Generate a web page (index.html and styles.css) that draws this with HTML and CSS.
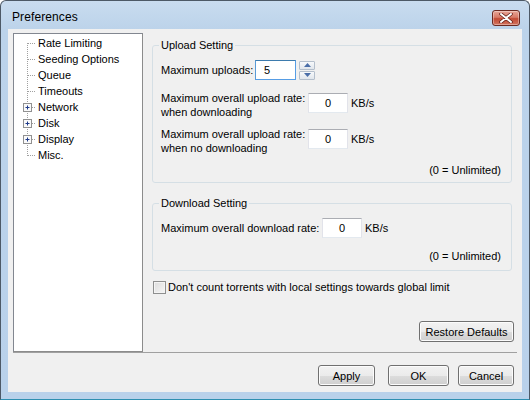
FILE: index.html
```html
<!DOCTYPE html>
<html>
<head>
<meta charset="utf-8">
<link rel="stylesheet" href="styles.css">
</head>
<body>
<div class="window">
  <div class="titlebar">
    <span class="title">Preferences</span>
    <div class="close">
      <svg width="14" height="10" viewBox="0 0 14 10"><path d="M2 1 L12 9 M12 1 L2 9" stroke="#5a1a14" stroke-width="3.4" stroke-linecap="round"/><path d="M2 1 L12 9 M12 1 L2 9" stroke="#ffffff" stroke-width="2" stroke-linecap="round"/></svg>
    </div>
  </div>
  <div class="client">
    <div class="main">
      <div class="tree">
        <div class="row"><svg width="20" height="16"><path d="M9.5 8 V16" class="dot"/><path d="M10 8.5 H18" class="dot"/></svg><span>Rate Limiting</span></div>
        <div class="row"><svg width="20" height="16"><path d="M9.5 0 V16" class="dot"/><path d="M10 8.5 H18" class="dot"/></svg><span>Seeding Options</span></div>
        <div class="row"><svg width="20" height="16"><path d="M9.5 0 V16" class="dot"/><path d="M10 8.5 H18" class="dot"/></svg><span>Queue</span></div>
        <div class="row"><svg width="20" height="16"><path d="M9.5 0 V16" class="dot"/><path d="M10 8.5 H18" class="dot"/></svg><span>Timeouts</span></div>
        <div class="row"><svg width="20" height="16"><path d="M9.5 0 V16" class="dot"/><path d="M14 8.5 H18" class="dot"/><rect x="5.5" y="4.5" width="8" height="8" class="box"/><path d="M7.5 8.5 H11.5 M9.5 6.5 V10.5" class="plus"/></svg><span>Network</span></div>
        <div class="row"><svg width="20" height="16"><path d="M9.5 0 V16" class="dot"/><path d="M14 8.5 H18" class="dot"/><rect x="5.5" y="4.5" width="8" height="8" class="box"/><path d="M7.5 8.5 H11.5 M9.5 6.5 V10.5" class="plus"/></svg><span>Disk</span></div>
        <div class="row"><svg width="20" height="16"><path d="M9.5 0 V16" class="dot"/><path d="M14 8.5 H18" class="dot"/><rect x="5.5" y="4.5" width="8" height="8" class="box"/><path d="M7.5 8.5 H11.5 M9.5 6.5 V10.5" class="plus"/></svg><span>Display</span></div>
        <div class="row"><svg width="20" height="16"><path d="M9.5 0 V9" class="dot"/><path d="M10 8.5 H18" class="dot"/></svg><span>Misc.</span></div>
      </div>
      <div class="panel">
        <fieldset class="group g-upload">
          <legend>Upload Setting</legend>
          <div class="line l1">
            <span class="lab w94">Maximum uploads:</span>
            <div class="input focus w41">5</div>
            <div class="spin">
              <div class="sbtn"><svg width="7" height="4"><path d="M0 4 L3.5 0 L7 4Z" fill="#4a6ea8"/></svg></div>
              <div class="sbtn"><svg width="7" height="4"><path d="M0 0 L3.5 4 L7 0Z" fill="#4a6ea8"/></svg></div>
            </div>
          </div>
          <div class="line l2">
            <span class="lab two w147">Maximum overall upload rate:<br>when downloading</span>
            <div class="input c w40">0</div>
            <span class="unit">KB/s</span>
          </div>
          <div class="line l3">
            <span class="lab two w147">Maximum overall upload rate:<br>when no downloading</span>
            <div class="input c w40">0</div>
            <span class="unit">KB/s</span>
          </div>
          <div class="note n1">(0 = Unlimited)</div>
        </fieldset>
        <fieldset class="group g-download">
          <legend>Download Setting</legend>
          <div class="line l4">
            <span class="lab w161">Maximum overall download rate:</span>
            <div class="input c w40">0</div>
            <span class="unit">KB/s</span>
          </div>
          <div class="note n2">(0 = Unlimited)</div>
        </fieldset>
        <div class="check">
          <span class="cbox"></span>
          <span>Don't count torrents with local settings towards global limit</span>
        </div>
        <div class="restore-row">
          <div class="btn restore">Restore Defaults</div>
        </div>
      </div>
    </div>
    <div class="sep"></div>
    <div class="buttons">
      <div class="btn b-apply">Apply</div>
      <div class="btn b-ok">OK</div>
      <div class="btn b-cancel">Cancel</div>
    </div>
  </div>
</div>
</body>
</html>
```
FILE: styles.css
```css
* { box-sizing: border-box; }
html, body { margin: 0; padding: 0; background: #ffffff; }
body { font-family: "Liberation Sans", Arial, sans-serif; font-size: 11px; color: #000; }

.window {
  width: 530px; height: 400px;
  border: 1px solid #4d5966;
  border-bottom-color: #2f8fb0;
  border-radius: 6px 6px 0 0;
  background: linear-gradient(#c9dcef 0px, #bcd3ea 28px, #b9d1ea 100%);
  display: flex; flex-direction: column;
  overflow: hidden;
}
.titlebar {
  height: 28px; flex: none;
  display: flex; align-items: flex-start; justify-content: space-between;
  padding: 0 9px 0 11px;
}
.title {
  font-size: 12px; line-height: 14px; margin-top: 9px; color: #000;
  letter-spacing: 0.1px;
}
.close {
  width: 28px; height: 16px; margin-top: 9px;
  border: 1px solid #6b2a22; border-radius: 3px;
  background: linear-gradient(#e8a597 0%, #d77a67 45%, #c24a34 55%, #d2745f 100%);
  box-shadow: inset 0 0 0 1px rgba(255,255,255,0.35);
  display: flex; align-items: center; justify-content: center;
}
.close svg { display: block; }

.client {
  flex: 1;
  margin: 0 7px 7px 7px;
  background: #f0f0f0;
  padding: 4px 5px 0 5px;
  display: flex; flex-direction: column;
}
.main { display: flex; height: 319px; }
.tree {
  width: 130px; height: 319px;
  background: #fff;
  border: 1px solid #828790;
  border-right-color: #8c8c8c; border-bottom-color: #8c8c8c;
  padding: 1px 0 0 4px;
}
.row { display: flex; align-items: center; height: 16px; }
.row svg { display: block; flex: none; }
.row span { line-height: 16px; white-space: nowrap; }
.dot { stroke: #a0a0a0; stroke-width: 1; stroke-dasharray: 1 1; fill: none; }
.box { fill: #fafafa; stroke: #919191; stroke-width: 1; }
.plus { stroke: #1e3a8a; stroke-width: 1; fill: none; }

.panel { flex: 1; padding: 5px 5px 0 9px; display: flex; flex-direction: column; }
.group {
  margin: 0; min-width: 0;
  border: 1px solid #d5dfe5; border-radius: 3px;
  padding: 0 9px 0 8px;
}
.group legend { padding: 0 2px; margin-left: -2px; line-height: 14px; }
.g-upload { padding-bottom: 5px; }
.g-download { margin-top: 13px; padding-bottom: 7px; }

.line { display: flex; align-items: flex-start; }
.l1 { margin-top: 8px; align-items: center; height: 20px; }
.l2 { margin-top: 11px; }
.l3 { margin-top: 8px; }
.l4 { margin-top: 8px; align-items: center; height: 20px; }
.lab { line-height: 14px; white-space: nowrap; flex: none; }
.lab.two { height: 28px; }
.w94 { width: 94px; }
.w147 { width: 147px; }
.w161 { width: 161px; }
.l2 .input, .l3 .input { margin-top: 2px; }
.l2 .unit, .l3 .unit { margin-top: 5px; }

.input {
  height: 20px; background: #fff; flex: none;
  border: 1px solid #e2e3ea; border-top-color: #abadb3; border-bottom-color: #e3e9ef;
  line-height: 18px; padding-left: 8px;
}
.input.focus { border-color: #569de5; border-top-color: #3d7bad; border-left-color: #5a9bd6; }
.input.c { text-align: center; padding-left: 0; }
.w41 { width: 41px; }
.w40 { width: 40px; }
.unit { margin-left: 3px; line-height: 14px; }

.spin { margin-left: 3px; width: 16px; height: 19px; display: flex; flex-direction: column; gap: 1px; }
.sbtn {
  flex: 1; border: 1px solid #b4bfcc; border-radius: 1px;
  background: linear-gradient(#f7f9fb, #e1e6ec);
  display: flex; align-items: center; justify-content: center;
}
.sbtn svg { display: block; }

.note { text-align: right; line-height: 14px; padding-right: 1px; }
.n1 { margin-top: 8px; }
.n2 { margin-top: 11px; }

.check { display: flex; align-items: center; margin-top: 8px; margin-left: 1px; height: 16px; }
.cbox {
  width: 13px; height: 13px; flex: none; margin-right: 2px;
  border: 1px solid #8e8f8f;
  background: linear-gradient(135deg, #dcdcdc, #f6f6f6);
  box-shadow: inset 0 0 0 1px #f4f4f4;
}

.restore-row { display: flex; justify-content: flex-end; margin-top: 26px; margin-right: -2px; }
.btn {
  height: 21px; border: 1px solid #707070; border-radius: 3px;
  background: linear-gradient(#f2f2f2 0%, #ebebeb 50%, #dddddd 51%, #cfcfcf 100%);
  box-shadow: inset 0 0 0 1px #fcfcfc;
  display: flex; align-items: center; justify-content: center;
  line-height: 14px; flex: none;
}
.restore { width: 95px; }

.sep { height: 1px; background: #a0a0a0; flex: none; }
.buttons { display: flex; justify-content: flex-end; margin-top: 12px; margin-right: 3px; }
.b-apply { width: 57px; }
.b-ok { width: 61px; margin-left: 13px; }
.b-cancel { width: 56px; margin-left: 9px; }
```
